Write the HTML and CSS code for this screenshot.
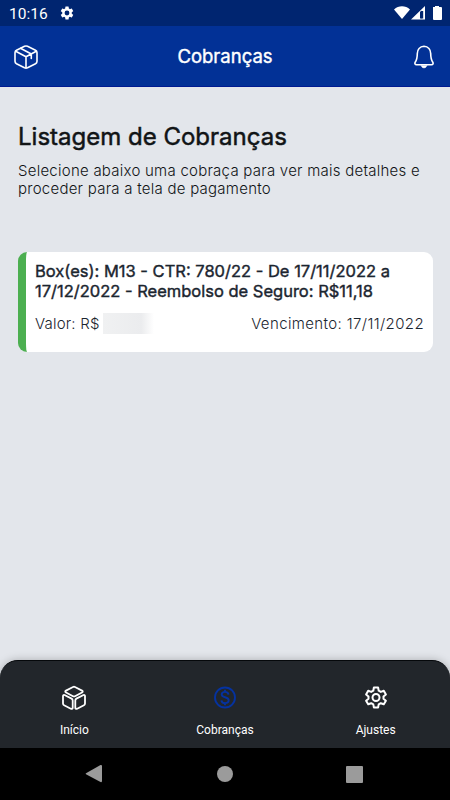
FILE: index.html
```html
<!DOCTYPE html>
<html lang="pt-BR">

<head>
    <meta charset="UTF-8" />
    <meta name="viewport" content="width=device-width, initial-scale=1.0" />
    <title>Cobranças</title>
    <link rel="stylesheet" href="styles.css">
</head>

<body>
    <div class="status-bar">
        <span class="clock">10:16</span>
        <svg class="status-gear" width="16" height="16" viewBox="0 0 24 24" fill="#fff">
            <path d="M19.14 12.94a7.2 7.2 0 0 0 0-1.88l2.03-1.58a.5.5 0 0 0 .12-.61l-1.92-3.32a.5.5 0 0 0-.59-.22l-2.39.96a7 7 0 0 0-1.62-.94l-.36-2.54a.5.5 0 0 0-.48-.41h-3.84a.5.5 0 0 0-.47.41l-.36 2.54a7.4 7.4 0 0 0-1.63.94l-2.39-.96a.5.5 0 0 0-.59.22L2.74 8.87a.5.5 0 0 0 .12.61l2.03 1.58a7.2 7.2 0 0 0 0 1.88l-2.03 1.58a.5.5 0 0 0-.12.61l1.92 3.32c.12.22.37.29.59.22l2.39-.96c.5.38 1.03.7 1.62.94l.36 2.54c.05.24.24.41.48.41h3.84c.24 0 .44-.17.47-.41l.36-2.54a7.4 7.4 0 0 0 1.63-.94l2.39.96c.22.08.47 0 .59-.22l1.92-3.32a.5.5 0 0 0-.12-.61zM12 15.6a3.6 3.6 0 1 1 0-7.2 3.6 3.6 0 0 1 0 7.2z" />
        </svg>
        <svg class="status-icons" width="50" height="16" viewBox="0 0 50 16" fill="#fff">
            <path d="M0 4.500C4.500.2 11.500.2 16 4.500L8 14z" />
            <path d="M17 14.500 31 1V14.500zM27.500 13.500V5.500L26 7V13.500z" fill-rule="evenodd" />
            <path d="M27 6h2.200v7.500H27z" fill="#002570" />
            <path d="M39 2h2V1h4v1h2q1 0 1 1V14q0 1-1 1H40q-1 0-1-1z" />
        </svg>
    </div>

    <header class="app-header">
        <svg width="26" height="26" viewBox="0 0 26 26" fill="none" stroke="#fff" stroke-width="1.600" stroke-linejoin="round" stroke-linecap="round">
            <path d="M11.500 2.300Q13 1.600 14.500 2.300L22.500 6.200Q24 7 24 8.700V17.200Q24 18.900 22.500 19.700L14.500 23.700Q13 24.400 11.500 23.700L3.500 19.700Q2 18.900 2 17.200V8.700Q2 7 3.500 6.200z" />
            <path d="M2.700 7.200 13 12.700 23.300 7.200M13 12.700V24M7.500 4.300 18.300 10V14.500" />
        </svg>
        <h1>Cobranças</h1>
        <svg width="26" height="26" viewBox="0 0 26 26" fill="none" stroke="#fff" stroke-width="1.600" stroke-linejoin="round" stroke-linecap="round">
            <path d="M13 2.200C8.900 2.600 6.300 5.700 6.300 9.500C6.300 14.500 5.800 16 4.200 18.200C3.400 19.500 4 20.700 5.500 20.700H20.500C22 20.700 22.600 19.500 21.800 18.200C20.200 16 19.700 14.500 19.700 9.500C19.700 5.700 17.100 2.600 13 2.200z" />
            <path d="M10 21.500Q11 24 13 24T16 21.500z" fill="#fff" stroke-width=".5" />
        </svg>
    </header>

    <main class="content">
        <h2>Listagem de Cobranças</h2>
        <p class="intro">Selecione abaixo uma cobraça para ver mais detalhes e proceder para a tela de pagamento</p>

        <div class="charge-card">
            <h3>Box(es): M13 - CTR: 780/22 - De 17/11/2022 a<br>17/12/2022 - Reembolso de Seguro: R$11,18</h3>
            <div class="charge-info">
                <span>Valor: R$</span>
                <span class="hidden-value"></span>
                <span class="due-date">Vencimento: 17/11/2022</span>
            </div>
        </div>
    </main>

    <nav class="tab-bar">
        <a class="tab">
            <svg width="26" height="26" viewBox="0 0 26 26" fill="none" stroke="#fff" stroke-width="1.800" stroke-linejoin="round">
                <path d="M12 2Q13 1.500 14 2L21 5.600Q22.500 6.600 21 7.500L14 11.200Q13 11.700 12 11.200L5 7.500Q3.500 6.600 5 5.600z" />
                <path d="M3.500 10Q2 9.600 2 11.300V18.500Q2 19.700 3.100 20.300L9.800 23.700Q11.700 24.400 11.700 22.700V15.500Q11.700 14.200 10.600 13.600z" />
                <path d="M22.500 10Q24 9.600 24 11.300V18.500Q24 19.700 22.900 20.300L16.200 23.700Q14.300 24.400 14.300 22.700V15.500Q14.300 14.200 15.400 13.600z" />
            </svg>
            <span>Início</span>
        </a>
        <a class="tab">
            <svg width="26" height="26" viewBox="0 0 26 26" fill="none" stroke="#0532a0" stroke-width="1.900">
                <circle cx="13" cy="12.500" r="10" />
                <path d="M16.500 9.600C16.300 7.700 14.900 6.900 13 6.900C11 6.900 9.700 7.900 9.700 9.500C9.700 13.200 16.700 11.200 16.700 15.300C16.700 17.100 15.200 18.100 13.100 18.100C11 18.100 9.600 17.200 9.400 15.300M13 4.700V7M13 18V20.300" />
            </svg>
            <span>Cobranças</span>
        </a>
        <a class="tab">
            <svg width="26" height="26" viewBox="0 0 26 26" fill="none" stroke="#fff" stroke-width="2" stroke-linejoin="round">
                <path d="M10.900 2.500H15.100L15.700 5.700L17.800 6.900L20.800 5.800L22.900 9.400L20.500 11.400V13.700L22.900 15.700L20.800 19.300L17.800 18.200L15.700 19.400L15.100 22.600H10.900L10.300 19.400L8.200 18.200L5.200 19.300L3.100 15.700L5.500 13.700V11.400L3.100 9.400L5.200 5.800L8.200 6.900L10.300 5.700z" />
                <circle cx="13" cy="12.500" r="3.500" />
            </svg>
            <span>Ajustes</span>
        </a>
    </nav>

    <div class="system-nav">
        <svg width="18" height="20" viewBox="0 0 18 20" fill="#9b9b9b"><path d="M1 9.200 15.500 1Q17 .6 17 2V17Q17 18.600 15.500 18L1 10.300Q.2 9.700 1 9.200z" /></svg>
        <span class="home-button"></span>
        <span class="recents-button"></span>
    </div>
</body>

</html>
```
FILE: styles.css
```css
* {
    box-sizing: border-box;
}

body {
    font-family: Inter, sans-serif;
    display: flex;
    flex-direction: column;
    height: 100vh;
    margin: 0;
    overflow: hidden;
    background-color: #e3e6eb;
    color: #111416;
}

h1,
h2,
h3,
p {
    margin: 0;
    font-weight: 400;
}

svg {
    display: block;
}

.status-bar {
    display: flex;
    align-items: center;
    height: 26px;
    padding: 0 6px 0 9px;
    background-color: #002570;
    color: #fff;
    font-family: Roboto, sans-serif;
    font-size: 15.5px;
}

.clock {
    width: 50px;
    padding-top: 2px;
}

.status-icons {
    margin-left: auto;
}

.app-header {
    display: flex;
    align-items: center;
    justify-content: space-between;
    height: 61px;
    padding: 1px 13px 0;
    background-color: #023196;
    border-bottom: 1px solid #001a91;
    color: #fff;
}

.app-header h1 {
    font-size: 18.5px;
    line-height: 22px;
    padding-bottom: 2px;
    -webkit-text-stroke: 0.4px #fff;
}

.content {
    flex: 1;
    padding: 35px 17px 0 18px;
}

.content h2 {
    font-size: 24px;
    line-height: 30px;
    -webkit-text-stroke: 0.5px #111416;
}

.intro {
    margin-top: 10px;
    font-size: 15px;
    font-weight: 300;
    line-height: 18px;
    letter-spacing: 0.25px;
}

.charge-card {
    height: 100px;
    margin-top: 54px;
    padding: 10px 9px 0;
    background-color: #fff;
    border-left: 8px solid #4caf50;
    border-radius: 9px;
    color: #1b252f;
}

.charge-card h3 {
    font-size: 16.5px;
    line-height: 19.5px;
    white-space: nowrap;
    -webkit-text-stroke: 0.4px #1b252f;
}

.charge-info {
    display: flex;
    align-items: center;
    margin-top: 12px;
    font-size: 15px;
    font-weight: 300;
    line-height: 21px;
    letter-spacing: 0.2px;
}

.hidden-value {
    width: 51px;
    height: 21px;
    margin-left: 3px;
    background: linear-gradient(90deg, #f0f1f2, #ebecee 75%, #fff);
}

.due-date {
    margin-left: auto;
    letter-spacing: 0.38px;
}

.tab-bar {
    display: flex;
    justify-content: space-around;
    height: 88px;
    background-color: #22262b;
    border-top: 1px solid #05080b;
    border-radius: 18px 18px 0 0;
    box-shadow: 0 0 8px rgba(0, 0, 0, 0.25);
}

.tab {
    display: flex;
    flex: 1;
    flex-direction: column;
    align-items: center;
    padding-top: 24px;
    color: #fff;
    font-family: Roboto, sans-serif;
    font-size: 12px;
    line-height: 16px;
}

.tab:first-child {
    padding-right: 2px;
}

.tab:last-child {
    padding-left: 2px;
}

.tab span {
    margin-top: 11px;
}

.system-nav {
    display: flex;
    align-items: center;
    justify-content: space-between;
    height: 52px;
    padding: 0 87px 0 85px;
    background-color: #000;
}

.home-button {
    width: 16px;
    height: 16px;
    border-radius: 50%;
    background-color: #9b9b9b;
}

.recents-button {
    width: 17px;
    height: 17px;
    border-radius: 1px;
    background-color: #9b9b9b;
}
```
